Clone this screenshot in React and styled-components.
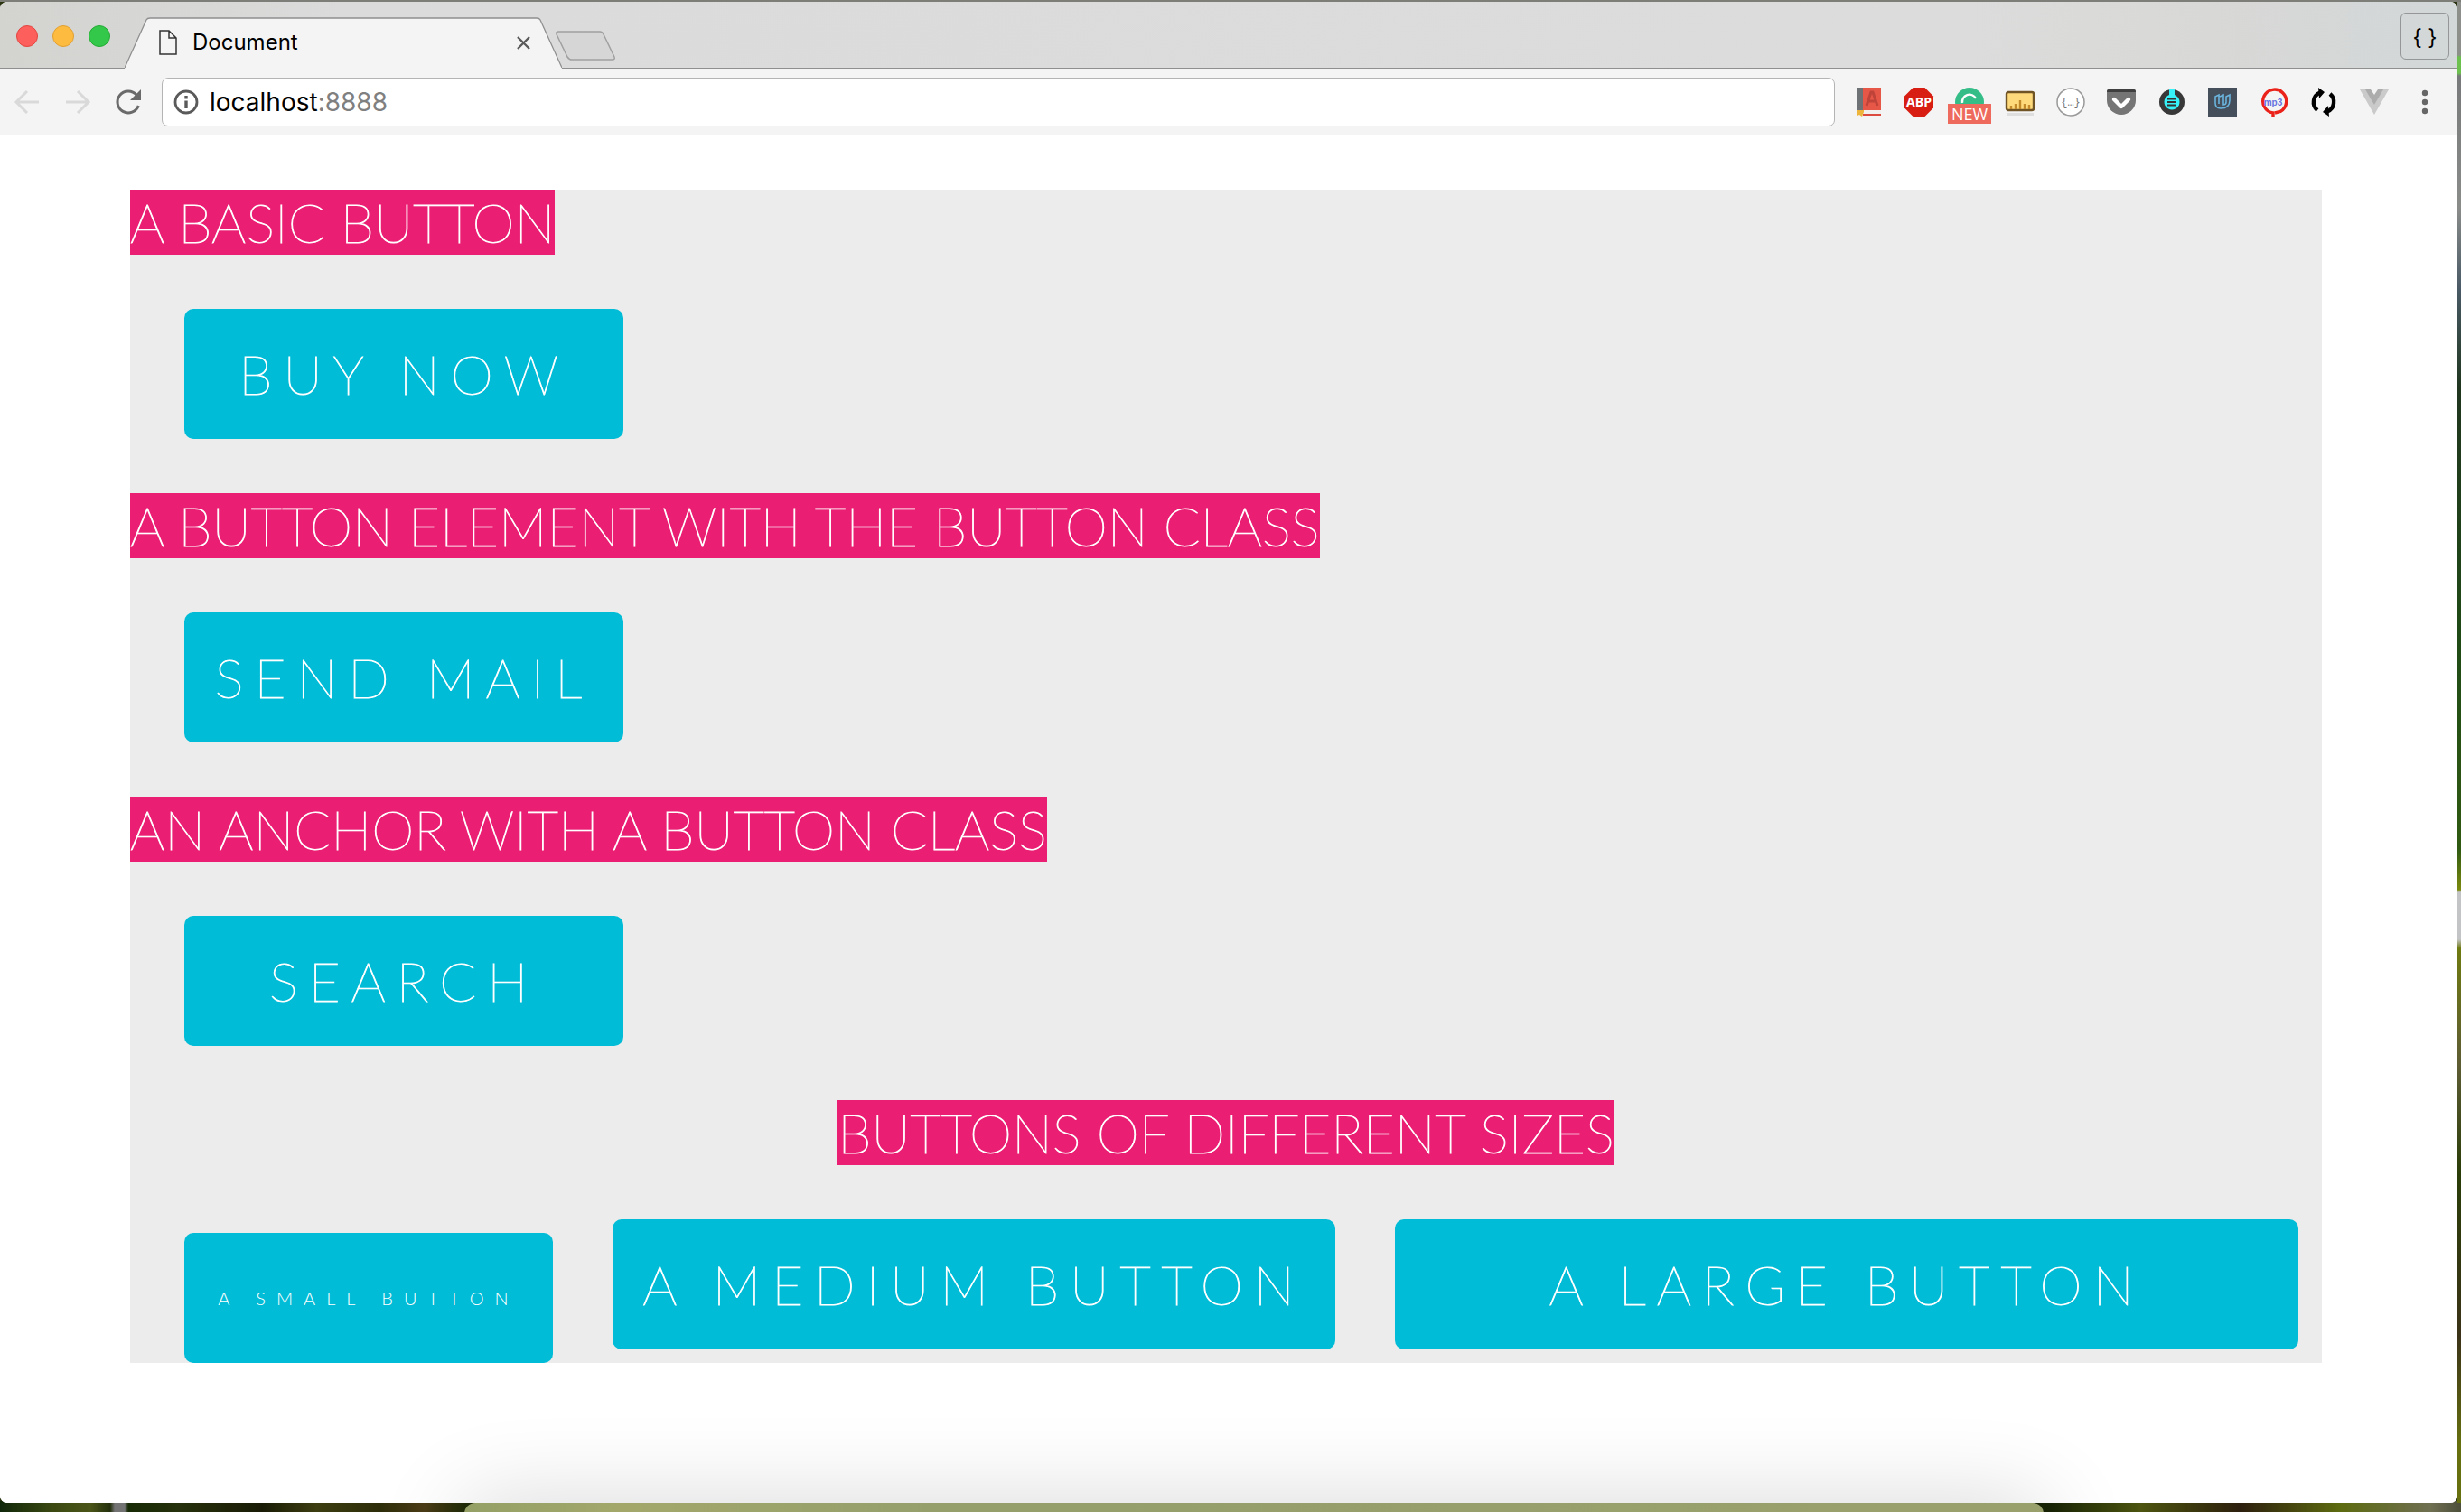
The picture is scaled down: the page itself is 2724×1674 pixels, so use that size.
import React from 'react';
import styled, { createGlobalStyle } from 'styled-components';

const GlobalStyle = createGlobalStyle`
  * { box-sizing: border-box; }
  html, body, #root { height: 100%; }
  body { margin: 0; overflow: hidden; font-family: Inter, "Liberation Sans", sans-serif; }
  button, input { font: inherit; }
`;

const Desktop = styled.div`
  position: relative;
  height: 100%;
  padding: 2px 4px 10px 0;
  overflow: hidden;
  background:
    linear-gradient(#7e7e79, #7e7e79) top / 100% 2px no-repeat,
    linear-gradient(180deg, #8d8f8a 0 61px, #6cc04e 63px 81px, #77797a 84px, #8a8c8a 230px, #4a5a66 320px, #20361f 430px, #1f4a16 700px, #2f5a12 940px, #7b8a0e 985px, #c3c4c6 988px 1040px, #6f7a10 1050px, #5d5c34 1180px, #2a3d08 1300px, #3b3318 1480px, #66700f 1600px) right top / 4px 1664px no-repeat,
    linear-gradient(90deg, #10270a 0, #3c4a12 60px, #4a5518 100px, #232f0c 122px, #737373 127px 138px, #172a06 142px, #26300c 200px, #191b06 290px, #3c3d10 350px, #2d2d0a 420px, #4b3c16 470px, #202b08 515px, #182406 2270px, #4c540f 2370px, #2d1f0e 2480px, #5d6b10 2590px, #6f6f52 2690px, #4d4f3a 100%) bottom / 100% 12px no-repeat,
    #2a3410;
`;

const Window = styled.main`
  position: relative;
  display: flex;
  flex-direction: column;
  height: 100%;
  overflow: hidden;
  background: #fff;
  border-radius: 8px;
`;

const TitleBar = styled.header`
  display: flex;
  flex: none;
  height: 74px;
  padding: 0 9px 0 18px;
  background: linear-gradient(90deg, #d3d3d0, #dbdbdb 14%, #dcdcdc 80%, #d8d8d6 90%, #d2d7d8);
  box-shadow: inset 0 -1px #8f8f8f;
`;

const Lights = styled.div`
  display: flex;
  align-items: center;
  gap: 16px;
  padding-top: 2px;
  width: 120px;
`;

const Light = styled.button`
  width: 24px;
  height: 24px;
  padding: 0;
  border: 1px solid ${(p) => p.$edge};
  border-radius: 50%;
  background: ${(p) => p.$fill};
`;

const Tab = styled.div`
  position: relative;
  display: flex;
  align-items: center;
  width: 484px;
  height: 57px;
  margin-top: 17px;
  padding: 0 34px 1px 38px;
  color: #000;
  font-size: 24px;
  line-height: 30px;
`;

const TabShape = styled.svg`
  position: absolute;
  inset: 0;
  width: 100%;
  height: 100%;
`;

const TabTitle = styled.span`
  position: relative;
  flex: 1;
  margin-left: 17px;
`;

const TabIcon = styled.svg`
  position: relative;
  width: 20px;
  height: 28px;
`;

const CloseButton = styled.button`
  position: relative;
  width: 17px;
  height: 17px;
  padding: 0;
  border: 0;
  background: none;
  svg { display: block; }
`;

const NewTab = styled.button`
  width: 68px;
  height: 34px;
  margin: 32px auto 0 -8px;
  padding: 0;
  border: 0;
  background: none;
  svg { display: block; }
`;

const ProfileButton = styled.button`
  width: 54px;
  height: 52px;
  margin-top: 12px;
  padding: 4px 0 0;
  border: 1px solid #949697;
  border-radius: 6px;
  background: transparent;
  color: #000;
  font-size: 24px;
  line-height: 30px;
`;

const Toolbar = styled.nav`
  display: flex;
  flex: none;
  align-items: center;
  height: 74px;
  padding: 0 8px 0 2px;
  background: #f4f4f4;
  border-bottom: 1px solid #bfbfbf;
`;

const IconButton = styled.button`
  position: relative;
  display: flex;
  flex: none;
  align-items: center;
  justify-content: center;
  width: 56px;
  height: 56px;
  padding: 0;
  border: 0;
  background: none;
  svg { width: 32px; height: 32px; overflow: visible; }
`;

const Address = styled.label`
  display: flex;
  flex: 1;
  align-items: center;
  height: 54px;
  margin: 0 9px;
  padding: 0 12px;
  gap: 12px;
  background: #fff;
  border: 1px solid #b4b4b4;
  border-radius: 7px;
  font-size: 28px;
  line-height: 34px;
`;

const UrlBox = styled.div`
  position: relative;
  flex: 1;
`;

const UrlText = styled.span`
  color: #000;
  i { color: #808080; font-style: normal; }
`;

const UrlInput = styled.input`
  position: absolute;
  inset: 0;
  width: 100%;
  padding: 0;
  border: 0;
  outline: 0;
  background: transparent;
`;

const Badge = styled.span`
  position: absolute;
  left: 4px;
  top: 30px;
  width: 48px;
  height: 22px;
  background: #ee6a5c;
  color: #fff;
  font: 500 18px/22px "Open Sans", sans-serif;
  text-align: center;
`;

const Page = styled.section`
  flex: 1;
  padding: 60px 150px 0 144px;
  background: #fff;
  font-family: Lato, sans-serif;
`;

const Panel = styled.div`
  background: #ececec;
`;

const Heading = styled.h2`
  width: fit-content;
  margin: 0 ${(p) => (p.$center ? 'auto' : '0')};
  background: #ea1e73;
  color: #fff;
  font-size: 60px;
  font-weight: 200;
  line-height: 72px;
  -webkit-text-stroke: 1px #fff;
`;

const Row = styled.div`
  display: flex;
  align-items: baseline;
  gap: 66px;
  padding: 60px 0 ${(p) => (p.$last ? '0' : '60px')} 60px;
`;

const widths = { basic: 486, small: 408, medium: 800, large: 1000 };

const Action = styled.button`
  display: block;
  width: ${(p) => widths[p.$size || 'basic']}px;
  height: 144px;
  padding: 0;
  border: 0;
  border-radius: 10px;
  background: #00bcd7;
  color: #fff;
  font-size: ${(p) => (p.$size === 'small' ? 20 : 60)}px;
  font-weight: ${(p) => (p.$size === 'small' ? 300 : 200)};
  line-height: 144px;
  letter-spacing: 12px;
  text-align: center;
  text-decoration: none;
  white-space: nowrap;
  -webkit-text-stroke: ${(p) => (p.$size === 'small' ? '0' : '1px #fff')};
`;

const Dock = styled.div`
  position: absolute;
  left: 514px;
  right: 462px;
  bottom: -90px;
  height: 100px;
  border-radius: 12px;
  background: linear-gradient(90deg, #94a066, #a3a76a 10%, #949f6c 30%, #9aa06c 100%);
  box-shadow: 0 0 100px rgba(0, 0, 0, 0.16);
`;

const Extension = ({ label, badge, children }) => (
  <IconButton aria-label={label}>
    <svg viewBox="0 0 32 32">{children}</svg>
    {badge && <Badge>{badge}</Badge>}
  </IconButton>
);

export default function App() {
  return (
    <Desktop>
      <GlobalStyle />
      <Window>
        <TitleBar>
          <Lights>
            <Light aria-label="Close window" $fill="#fd605c" $edge="#e2463f" />
            <Light aria-label="Minimize window" $fill="#fdbc40" $edge="#e0a033" />
            <Light aria-label="Zoom window" $fill="#34c84a" $edge="#25aa35" />
          </Lights>
          <Tab>
            <TabShape viewBox="0 0 484 57" preserveAspectRatio="none">
              <path d="M0 57 V56 L24 3 Q25 1 28 1 H456 Q459 1 460 3 L484 56 V57Z" fill="#f4f4f4" />
              <path d="M0 56 L24 3 Q25 1 28 1 H456 Q459 1 460 3 L484 56" fill="none" stroke="#8f8f8f" strokeWidth="1.300" />
            </TabShape>
            <TabIcon viewBox="0 0 20 28" fill="none" stroke="#333" strokeWidth="1.500">
              <path d="M1 1h10l8 8v18H1zM11 1v8h8" />
            </TabIcon>
            <TabTitle>Document</TabTitle>
            <CloseButton aria-label="Close tab">
              <svg viewBox="0 0 17 17" stroke="#5a5a5a" strokeWidth="2.400"><path d="M2 2l13 13M15 2L2 15" /></svg>
            </CloseButton>
          </Tab>
          <NewTab aria-label="New tab">
            <svg viewBox="0 0 68 34" fill="#d6d6d6" stroke="#a0a0a0" strokeWidth="1.500">
              <path d="M4 1h46q3 0 4 3l12 25q1 3-2 3H19q-3 0-5-3L2 4q-1-3 2-3z" />
            </svg>
          </NewTab>
          <ProfileButton aria-label="Profile">{'{ }'}</ProfileButton>
        </TitleBar>

        <Toolbar>
          <IconButton aria-label="Back">
            <svg viewBox="0 0 32 32" fill="none" stroke="#d9d9d9" strokeWidth="3"><path d="M29 16H5M16 4L4 16l12 12" /></svg>
          </IconButton>
          <IconButton aria-label="Forward">
            <svg viewBox="0 0 32 32" fill="none" stroke="#d9d9d9" strokeWidth="3"><path d="M3 16h24M16 4l12 12-12 12" /></svg>
          </IconButton>
          <IconButton aria-label="Reload">
            <svg viewBox="0 0 32 32"><path d="M25 8A12 12 0 1 0 27.300 20" fill="none" stroke="#6a6a6a" strokeWidth="3" /><path d="M30 2v12H18z" fill="#6a6a6a" /></svg>
          </IconButton>
          <Address>
            <svg width="28" height="28" viewBox="0 0 28 28">
              <circle cx="14" cy="14" r="12" fill="none" stroke="#5a5a5a" strokeWidth="2.800" />
              <path d="M14 7v3.400M14 12.500v8.500" stroke="#5a5a5a" strokeWidth="3.400" />
            </svg>
            <UrlBox>
              <UrlText>localhost<i>:8888</i></UrlText>
              <UrlInput aria-label="Address" />
            </UrlBox>
          </Address>
          <Extension label="Dictionary">
            <path d="M3 0h7v26l-7 4z" fill="#6f7274" />
            <path d="M10 0h20v25H10z" fill="#e65748" />
            <path d="M8 25h22v6H6z" fill="#f2f0ee" /><path d="M10 29h20v2H10z" fill="#dc4b40" />
            <path d="M4 25h7v2l-2 5-3-2-2 1z" fill="#eeb53c" />
            <path d="M14 20l5-15h2l5 15M16 15h8" fill="none" stroke="#bf4339" strokeWidth="3" />
          </Extension>
          <Extension label="Ad blocker">
            <path d="M9.500 0h13L32 9.500v13L22.500 32h-13L0 22.500v-13z" fill="#d81e12" />
            <text x="16" y="21" textAnchor="middle" fontFamily="Open Sans" fontWeight="700" fontSize="14" fill="#fff">ABP</text>
          </Extension>
          <Extension label="Updates" badge="NEW">
            <circle cx="16" cy="16" r="16" fill="#35bd88" />
            <path d="M8 17a8 8 0 0 1 15-5" fill="none" stroke="#fff" strokeWidth="2.400" />
          </Extension>
          <Extension label="Ruler">
            <path d="M1 28h30v3H1z" fill="#dedede" />
            <rect x="1" y="5" width="30" height="20" rx="2" fill="#ffda7c" stroke="#705425" strokeWidth="2.400" />
            <path d="M6 24v-4M11 24v-6M16 24V14M21 24v-6M26 24v-5" stroke="#c28a2a" strokeWidth="2.400" />
          </Extension>
          <Extension label="JSON viewer">
            <circle cx="16" cy="16" r="15" fill="#fff" stroke="#999" strokeWidth="1.500" />
            <text x="16" y="20" textAnchor="middle" fontFamily="Liberation Mono" fontSize="12" fill="#777">{'{…}'}</text>
          </Extension>
          <Extension label="Save for later">
            <path d="M0 4q0-2 2-2h28q2 0 2 2v10a16 16 0 0 1-32 0z" fill="#757575" />
            <path d="M0 5q0-3 2-3h28q2 0 2 3z" fill="#3f3f3f" />
            <path d="M8 13l8 8 8-8" fill="none" stroke="#fff" strokeWidth="4.400" strokeLinecap="round" strokeLinejoin="round" />
          </Extension>
          <Extension label="Notes">
            <circle cx="16" cy="16" r="14" fill="#383838" />
            <path d="M13 2h6v6a8.500 8.500 0 1 1-6 0z" fill="#36f2f8" />
            <path d="M11 12.500h10M11 16h10M11 19.500h10" stroke="#333" strokeWidth="1.800" />
          </Extension>
          <Extension label="Learning">
            <path d="M0 0h32v32H0z" fill="#454f5b" />
            <path d="M12 18V8l-4 2v7q0 6 6 6 10 0 10-9V8l-4 2v6q0 3-3 3V8l-4 2" fill="none" stroke="#69b3dd" strokeWidth="1.600" />
          </Extension>
          <Extension label="MP3 downloader">
            <path d="M16 32v-4A13 13 0 1 1 24 26.500L18 28" fill="none" stroke="#ea2219" strokeWidth="3.400" />
            <text x="16" y="20" textAnchor="middle" fontFamily="Liberation Sans" fontWeight="700" fontSize="10" fill="#6873e0">mp3</text>
          </Extension>
          <Extension label="Sync">
            <path d="M9 25A11.500 11.500 0 0 1 12 5.500M23 7a11.500 11.500 0 0 1-3 19.500" fill="none" stroke="#000" strokeWidth="4.400" />
            <path d="M10 0l7 5-6 7zM22 32l-7-5 6-7z" />
          </Extension>
          <Extension label="Vue devtools">
            <path d="M0 2h32L16 30z" fill="#cacaca" /><path d="M6 2h20L16 19z" fill="#acacac" /><path d="M12 2h8l-4 6z" fill="#f4f4f4" />
          </Extension>
          <Extension label="Menu">
            <g fill="#666"><circle cx="16" cy="6" r="3.200" /><circle cx="16" cy="16" r="3.200" /><circle cx="16" cy="26" r="3.200" /></g>
          </Extension>
        </Toolbar>

        <Page>
          <Panel>
            <Heading>A BASIC BUTTON</Heading>
            <Row><Action>BUY NOW</Action></Row>
            <Heading>A BUTTON ELEMENT WITH THE BUTTON CLASS</Heading>
            <Row><Action>SEND MAIL</Action></Row>
            <Heading>AN ANCHOR WITH A BUTTON CLASS</Heading>
            <Row><Action as="a" href="#search">SEARCH</Action></Row>
            <Heading $center>BUTTONS OF DIFFERENT SIZES</Heading>
            <Row $last>
              <Action $size="small">A SMALL BUTTON</Action>
              <Action $size="medium">A MEDIUM BUTTON</Action>
              <Action $size="large">A LARGE BUTTON</Action>
            </Row>
          </Panel>
        </Page>
      </Window>
      <Dock />
    </Desktop>
  );
}
